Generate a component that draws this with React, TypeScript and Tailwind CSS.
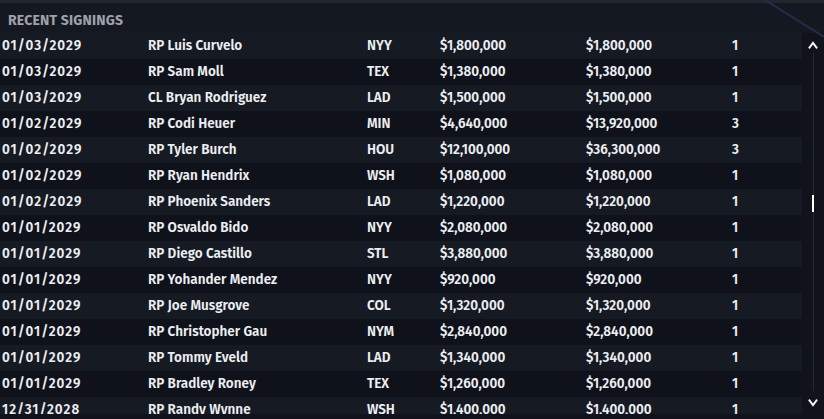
import React from 'react';

type Signing = {
  date: string;
  player: string;
  team: string;
  salary: string;
  total: string;
  years: number;
};

const signings: Signing[] = [
  { date: '01/03/2029', player: 'RP Luis Curvelo', team: 'NYY', salary: '$1,800,000', total: '$1,800,000', years: 1 },
  { date: '01/03/2029', player: 'RP Sam Moll', team: 'TEX', salary: '$1,380,000', total: '$1,380,000', years: 1 },
  { date: '01/03/2029', player: 'CL Bryan Rodriguez', team: 'LAD', salary: '$1,500,000', total: '$1,500,000', years: 1 },
  { date: '01/02/2029', player: 'RP Codi Heuer', team: 'MIN', salary: '$4,640,000', total: '$13,920,000', years: 3 },
  { date: '01/02/2029', player: 'RP Tyler Burch', team: 'HOU', salary: '$12,100,000', total: '$36,300,000', years: 3 },
  { date: '01/02/2029', player: 'RP Ryan Hendrix', team: 'WSH', salary: '$1,080,000', total: '$1,080,000', years: 1 },
  { date: '01/02/2029', player: 'RP Phoenix Sanders', team: 'LAD', salary: '$1,220,000', total: '$1,220,000', years: 1 },
  { date: '01/01/2029', player: 'RP Osvaldo Bido', team: 'NYY', salary: '$2,080,000', total: '$2,080,000', years: 1 },
  { date: '01/01/2029', player: 'RP Diego Castillo', team: 'STL', salary: '$3,880,000', total: '$3,880,000', years: 1 },
  { date: '01/01/2029', player: 'RP Yohander Mendez', team: 'NYY', salary: '$920,000', total: '$920,000', years: 1 },
  { date: '01/01/2029', player: 'RP Joe Musgrove', team: 'COL', salary: '$1,320,000', total: '$1,320,000', years: 1 },
  { date: '01/01/2029', player: 'RP Christopher Gau', team: 'NYM', salary: '$2,840,000', total: '$2,840,000', years: 1 },
  { date: '01/01/2029', player: 'RP Tommy Eveld', team: 'LAD', salary: '$1,340,000', total: '$1,340,000', years: 1 },
  { date: '01/01/2029', player: 'RP Bradley Roney', team: 'TEX', salary: '$1,260,000', total: '$1,260,000', years: 1 },
  { date: '12/31/2028', player: 'RP Randy Wynne', team: 'WSH', salary: '$1,400,000', total: '$1,400,000', years: 1 },
];

function SigningRow({ s, index }: { s: Signing; index: number }) {
  const bg = index % 2 === 0 ? 'bg-[#161a23]' : 'bg-[#0f121a]';
  return (
    <div className={`flex h-[26px] shrink-0 items-center text-[13.5px] font-semibold text-[#eceef2] ${bg}`}>
      <span className="w-[148px] pl-[2px] tracking-[1px]">{s.date}</span>
      <span className="w-[219px]">{s.player}</span>
      <span className="w-[73px]">{s.team}</span>
      <span className="w-[146px]">{s.salary}</span>
      <span className="w-[146px]">{s.total}</span>
      <span>{s.years}</span>
    </div>
  );
}

function Chevron({ down = false }: { down?: boolean }) {
  return (
    <svg width="10" height="8" viewBox="0 0 10 8" className={down ? 'rotate-180' : ''}>
      <path d="M1.5 6.5 L5 1.8 L8.5 6.5" fill="none" stroke="#f2f2f2" strokeWidth="2" strokeLinecap="square" />
    </svg>
  );
}

export default function App() {
  return (
    <div
      className="relative h-[419px] w-[824px] overflow-hidden bg-[#10131b]"
      style={{ fontFamily: '"Fira Sans", "Noto Sans", "Open Sans", sans-serif' }}
    >
      <svg className="pointer-events-none absolute right-0 top-0" width="90" height="40" viewBox="0 0 90 40">
        <line x1="31" y1="0" x2="90" y2="37" stroke="#262c4a" strokeWidth="2" />
      </svg>
      <div className="h-[3px] bg-[#23262e]" />
      <div className="flex h-[30px] items-center bg-[#141821] pl-[8px] pt-[4px] text-[14px] font-bold uppercase tracking-[0.2px] text-[#9fa1a8]">
        Recent Signings
      </div>
      <div className="flex">
        <div className="flex h-[381px] w-[802px] flex-col overflow-hidden">
          {signings.map((s, i) => (
            <SigningRow key={i} s={s} index={i} />
          ))}
        </div>
        <div className="flex w-[22px] flex-col items-center pt-[8px]">
          <Chevron />
          <div className="relative mt-[4px] h-[338px] w-px bg-[#262932]">
            <div className="absolute left-[-1px] top-[142px] h-[17px] w-[2px] bg-white" />
          </div>
          <div className="mt-[8px]">
            <Chevron down />
          </div>
        </div>
      </div>
    </div>
  );
}
